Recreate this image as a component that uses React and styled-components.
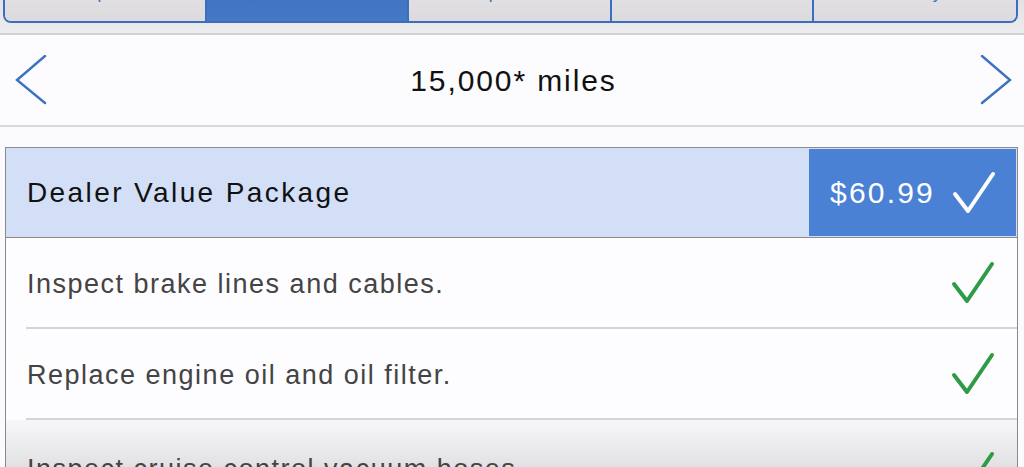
import styled, { createGlobalStyle } from "styled-components";

const GlobalStyle = createGlobalStyle`
  html, body {
    margin: 0;
    padding: 0;
    overflow: hidden;
  }
  body {
    background: #fbfafc;
    font-family: "Liberation Sans", Arial, Helvetica, sans-serif;
  }
`;

// Page
const Page = styled.div`
  width: 1024px;
  height: 467px;
  display: flex;
  flex-direction: column;
  overflow: hidden;
`;

// Top segmented control strip (labels scrolled mostly out of view)
const TopStrip = styled.div`
  height: 33px;
  padding: 0 6px 0 3px;
  background: linear-gradient(#e4e2e5, #ecebee);
  border-bottom: 2px solid #d2d0d3;
  overflow: hidden;
  flex-shrink: 0;
`;

const Segments = styled.div`
  display: grid;
  grid-template-columns: repeat(5, 1fr);
  height: 54px;
  margin-top: -33px;
  border: 2px solid #3a6fbf;
  border-top: none;
  border-radius: 0 0 8px 8px;
  overflow: hidden;
`;

const Segment = styled.div`
  display: flex;
  align-items: center;
  justify-content: center;
  font-size: 17px;
  color: ${(p) => (p.active ? "#ffffff" : "#3a6fbf")};
  background: ${(p) =>
    p.active
      ? "linear-gradient(#3a6fbf, #4579c6)"
      : "linear-gradient(#e8e6e9, #dcdadd)"};
  border-right: ${(p) => (p.last ? "none" : "2px solid #3a6fbf")};
`;

// Mileage navigation
const Nav = styled.div`
  height: 90px;
  display: flex;
  align-items: center;
  justify-content: space-between;
  padding: 0 12px 0 15px;
  background: #fcfbfd;
  border-bottom: 2px solid #d8d7d9;
  flex-shrink: 0;
`;

const Title = styled.div`
  font-size: 30px;
  letter-spacing: 1.9px;
  color: #111;
  padding-top: 2px;
`;

const Chevron = ({ dir }) => (
  <svg width="32" height="50" viewBox="0 0 32 50">
    <path
      d={dir === "left" ? "M30 1 L2 25 L30 48" : "M2 1 L30 25 L2 48"}
      fill="none"
      stroke="#3d72c0"
      strokeWidth="2.4"
      strokeLinecap="round"
    />
  </svg>
);

// Package card
const Card = styled.div`
  margin: 20px 6px 0 5px;
  border: 1px solid #8a8a8c;
  border-bottom: none;
  background: #fdfcfe;
  flex: 1;
  display: flex;
  flex-direction: column;
`;

const Header = styled.div`
  height: 89px;
  display: flex;
  align-items: stretch;
  background: #d3dff6;
  border-bottom: 1px solid #8a8a8c;
  flex-shrink: 0;
`;

const PackageName = styled.div`
  flex: 1;
  display: flex;
  align-items: center;
  padding-left: 21px;
  font-size: 28px;
  letter-spacing: 2.4px;
  color: #111;
`;

const PriceBox = styled.div`
  width: 186px;
  margin: 1px 1px 1px 0;
  padding-left: 21px;
  display: flex;
  align-items: center;
  gap: 17px;
  background: #4a81d5;
  color: #fff;
  font-size: 30px;
  letter-spacing: 2.2px;
`;

const Item = styled.div`
  height: 91px;
  margin-left: 20px;
  padding-right: 22px;
  display: flex;
  align-items: center;
  justify-content: space-between;
  border-bottom: 2px solid #d5d4d7;
  flex-shrink: 0;
  box-sizing: border-box;
`;

const ItemText = styled.span`
  font-size: 27px;
  letter-spacing: 1.5px;
  color: #444;
  padding: 4px 0 0 1px;
`;

// Last row fades out toward the bottom of the screen
const Fade = styled.div`
  flex: 1;
  background: linear-gradient(#f7f6f8, #d4d3d6);
`;

const FadedItem = styled(Item)`
  border-bottom: none;
  align-items: flex-start;
  padding-top: 30px;
  height: auto;
`;

const Check = ({ color }) => (
  <svg width="44" height="46" viewBox="0 0 44 46">
    <path
      d="M3 24 L16 41 L41 4"
      fill="none"
      stroke={color}
      strokeWidth="4"
      strokeLinecap="round"
      strokeLinejoin="round"
    />
  </svg>
);

const tabs = ["Repairs", "Maintenance", "Specials", "Service", "History"];
const items = [
  "Inspect brake lines and cables.",
  "Replace engine oil and oil filter.",
];

export default function App() {
  return (
    <Page>
      <GlobalStyle />
      <TopStrip>
        <Segments>
          {tabs.map((t, i) => (
            <Segment key={t} active={i === 1} last={i === tabs.length - 1}>
              {t}
            </Segment>
          ))}
        </Segments>
      </TopStrip>
      <Nav>
        <Chevron dir="left" />
        <Title>15,000* miles</Title>
        <Chevron dir="right" />
      </Nav>
      <Card>
        <Header>
          <PackageName>Dealer Value Package</PackageName>
          <PriceBox>
            $60.99
            <Check color="#ffffff" />
          </PriceBox>
        </Header>
        {items.map((text) => (
          <Item key={text}>
            <ItemText>{text}</ItemText>
            <Check color="#2e9b46" />
          </Item>
        ))}
        <Fade>
          <FadedItem>
            <ItemText>Inspect cruise control vacuum hoses.</ItemText>
            <Check color="#2e9b46" />
          </FadedItem>
        </Fade>
      </Card>
    </Page>
  );
}
